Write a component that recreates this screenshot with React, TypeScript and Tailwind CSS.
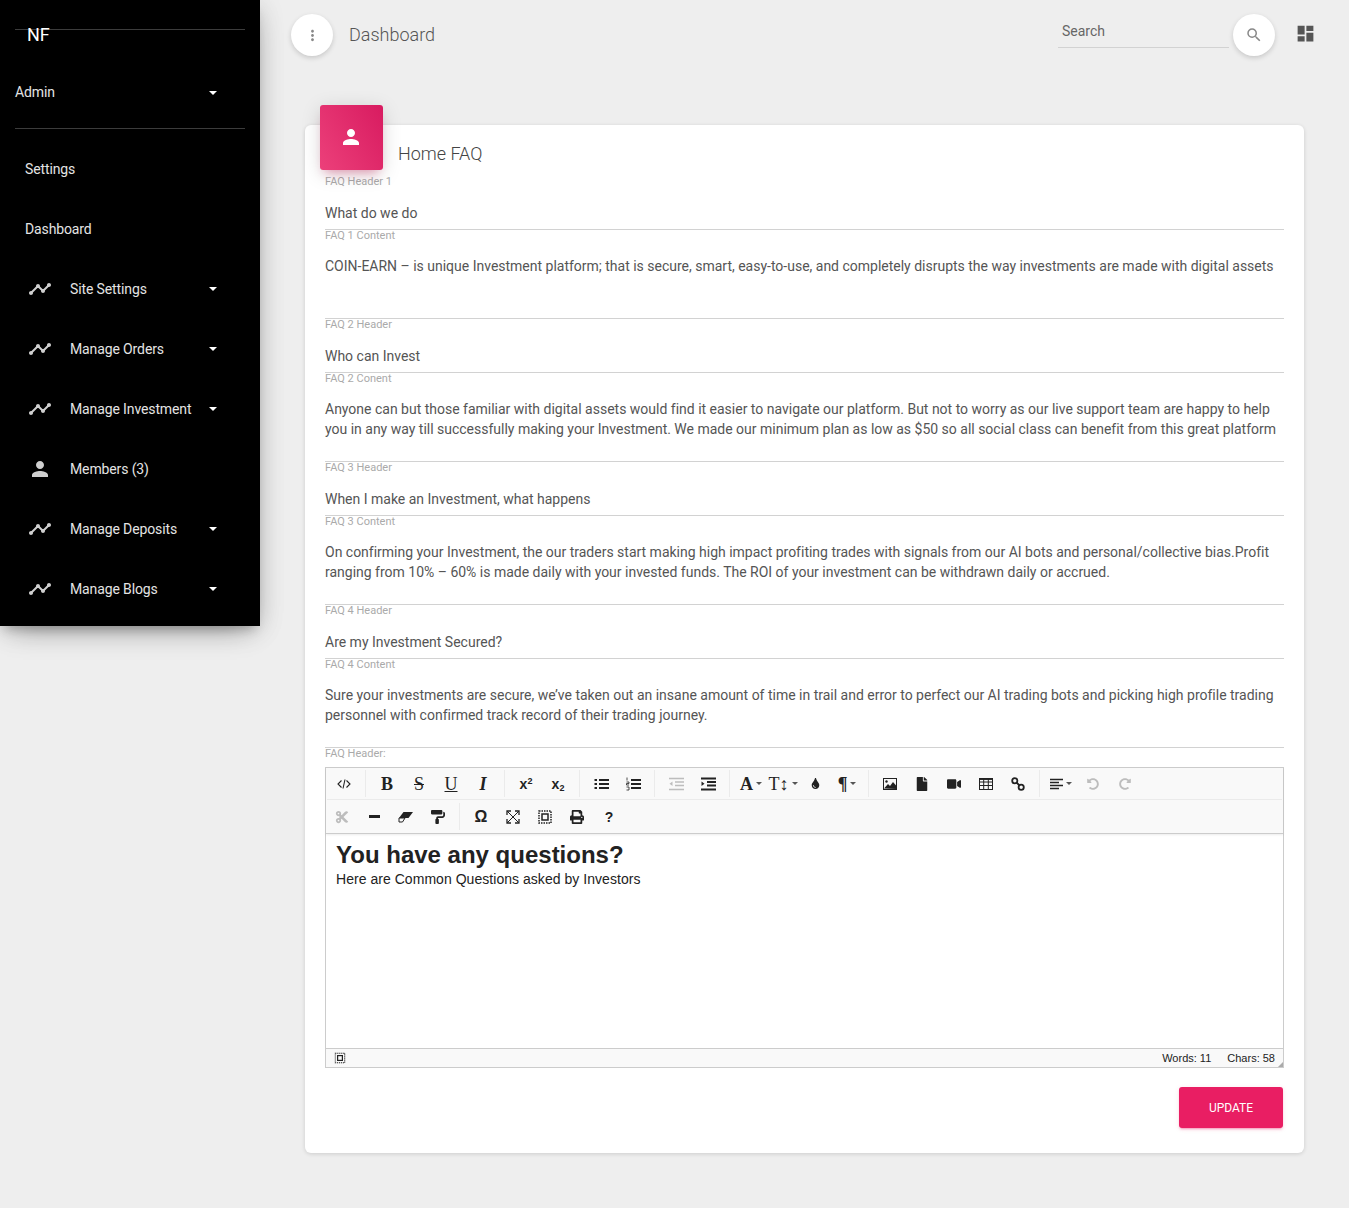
import type { ReactNode } from 'react';
import { MdDashboard, MdMoreVert, MdPerson, MdSearch, MdTimeline } from 'react-icons/md';
import { FaCut, FaFile, FaPaintRoller, FaPrint, FaRedoAlt, FaTint, FaUndoAlt, FaVideo } from 'react-icons/fa';

const faqs = [
  {
    headerLabel: 'FAQ Header 1',
    header: 'What do we do',
    contentLabel: 'FAQ 1 Content',
    content: 'COIN-EARN – is unique Investment platform; that is secure, smart, easy-to-use, and completely disrupts the way investments are made with digital assets',
  },
  {
    headerLabel: 'FAQ 2 Header',
    header: 'Who can Invest',
    contentLabel: 'FAQ 2 Conent',
    content: 'Anyone can but those familiar with digital assets would find it easier to navigate our platform. But not to worry as our live support team are happy to help you in any way till successfully making your Investment. We made our minimum plan as low as $50 so all social class can benefit from this great platform',
  },
  {
    headerLabel: 'FAQ 3 Header',
    header: 'When I make an Investment, what happens',
    contentLabel: 'FAQ 3 Content',
    content: 'On confirming your Investment, the our traders start making high impact profiting trades with signals from our AI bots and personal/collective bias.Profit ranging from 10% – 60% is made daily with your invested funds. The ROI of your investment can be withdrawn daily or accrued.',
  },
  {
    headerLabel: 'FAQ 4 Header',
    header: 'Are my Investment Secured?',
    contentLabel: 'FAQ 4 Content',
    content: 'Sure your investments are secure, we’ve taken out an insane amount of time in trail and error to perfect our AI trading bots and picking high profile trading personnel with confirmed track record of their trading journey.',
  },
];

const navItems = [
  { label: 'Site Settings', caret: true },
  { label: 'Manage Orders', caret: true },
  { label: 'Manage Investment', caret: true },
  { label: 'Members (3)', caret: false },
  { label: 'Manage Deposits', caret: true },
  { label: 'Manage Blogs', caret: true },
];

function Caret({ className = 'border-t-white' }: { className?: string }) {
  return <span className={`inline-block h-0 w-0 border-x-4 border-t-4 border-x-transparent ${className}`} />;
}

function Sidebar() {
  return (
    <aside className="relative z-10 w-[260px] shrink-0 bg-black pb-[7px] pt-[29px] text-sm tracking-[-0.12px] text-[#e4e4e4] shadow-[0_10px_30px_-12px_rgba(0,0,0,0.42),0_4px_25px_0_rgba(0,0,0,0.12),0_8px_10px_-5px_rgba(0,0,0,0.2)]">
      <span className="absolute left-[27px] top-[24px] text-lg leading-[22px] tracking-normal text-white">NF</span>
      <div className="mx-[15px] border-t border-[#3c3c3c]" />
      <div className="mx-[15px] flex h-[99px] items-start justify-between border-b border-[#3c3c3c] pt-[52px] leading-5">
        <span>Admin</span>
        <span className="mr-[28px] mt-[9px] flex"><Caret /></span>
      </div>
      <nav className="mt-[10px]">
        <div className="flex h-[60px] items-center pl-[25px]">Settings</div>
        <div className="flex h-[60px] items-center pl-[25px]">Dashboard</div>
        {navItems.map((item) => (
          <div key={item.label} className="flex h-[60px] items-center pl-7">
            <span className="flex w-[42px] shrink-0 text-[#cfcfcf]">
              {item.caret ? <MdTimeline size={24} /> : <MdPerson size={24} />}
            </span>
            <span className="flex-1">{item.label}</span>
            {item.caret && <span className="mr-[43px] flex"><Caret /></span>}
          </div>
        ))}
      </nav>
    </aside>
  );
}

function Header() {
  return (
    <header className="flex h-14 items-end">
      <div className="flex h-[42px] w-[42px] items-center justify-center rounded-full bg-white text-[#888] shadow-[0_2px_5px_rgba(0,0,0,0.16)]">
        <MdMoreVert size={17} />
      </div>
      <span className="ml-4 self-center pt-[14px] text-lg font-light leading-[42px] text-[#555]">Dashboard</span>
      <div className="ml-auto flex items-end">
        <div className="mb-2 h-[34px] w-[171px] border-b border-[#d2d2d2] pl-1 pt-[7px] text-sm leading-5 text-[#666]">Search</div>
        <div className="ml-1 flex h-[42px] w-[42px] items-center justify-center rounded-full bg-white text-[#888] shadow-[0_2px_5px_rgba(0,0,0,0.16)]">
          <MdSearch size={18} />
        </div>
        <span className="mb-3 ml-5 flex text-[#555]"><MdDashboard size={21} /></span>
      </div>
    </header>
  );
}

function Field({ label, value, tall }: { label: string; value: string; tall?: boolean }) {
  return (
    <div className={`border-b border-[#d2d2d2] ${tall ? 'h-[89px]' : 'h-[54px]'}`}>
      <div className="text-[11px] leading-[11px] text-[#aaa]">{label}</div>
      <div className={`text-sm leading-5 tracking-[-0.005px] text-[#555] ${tall ? 'mt-[15px]' : 'mt-4'}`}>{value}</div>
    </div>
  );
}

function ToolBtn({ children, w = 'w-8', off }: { children: ReactNode; w?: string; off?: boolean }) {
  return (
    <span className={`flex h-8 shrink-0 items-center justify-center ${w} ${off ? 'text-[#bdbdbd]' : 'text-[#222]'}`}>
      {children}
    </span>
  );
}

function Sep() {
  return <span className="mx-[5px] h-[27px] w-px shrink-0 bg-[#ebebeb]" />;
}

function Glyph({ children, className = '' }: { children: ReactNode; className?: string }) {
  return <span className={`font-['Liberation_Serif',serif] text-[18px] font-bold leading-none ${className}`}>{children}</span>;
}

function Svg({ children, w = 14, h = 14 }: { children: ReactNode; w?: number; h?: number }) {
  return <svg width={w} height={h} viewBox={`0 0 ${w} ${h}`} fill="none" stroke="currentColor">{children}</svg>;
}

const SelectAllIcon = () => (
  <Svg>
    <rect x="1" y="1" width="12" height="12" strokeWidth="1.5" strokeDasharray="1.5 1" />
    <rect x="4" y="4" width="6" height="6" strokeWidth="1.5" />
  </Svg>
);

const SmallCaret = () => (
  <span className="ml-[3px] flex"><Caret className="border-x-[3px] border-t-[3px] border-t-[#555]" /></span>
);

function Toolbar() {
  return (
    <div className="border-b border-[#ccc] bg-[#f9f9f9] shadow-[0_1px_2px_rgba(0,0,0,0.08)]">
      <div className="mx-px flex h-[32px] items-center border-b border-[#ebebeb] pl-px">
        <ToolBtn>
          <Svg><path d="M4.5 3.5 1 7l3.5 3.5M9.5 3.5 13 7l-3.5 3.5M8 2.5l-2 9" strokeWidth="1.1" /></Svg>
        </ToolBtn>
        <Sep />
        <ToolBtn><Glyph>B</Glyph></ToolBtn>
        <ToolBtn><Glyph className="font-normal line-through">S</Glyph></ToolBtn>
        <ToolBtn><Glyph className="font-normal underline">U</Glyph></ToolBtn>
        <ToolBtn><Glyph className="italic">I</Glyph></ToolBtn>
        <Sep />
        <ToolBtn><span className="font-['Liberation_Sans',sans-serif] text-sm font-bold">x<sup className="text-[9px]">2</sup></span></ToolBtn>
        <ToolBtn><span className="font-['Liberation_Sans',sans-serif] text-sm font-bold">x<sub className="text-[9px]">2</sub></span></ToolBtn>
        <Sep />
        <ToolBtn>
          <Svg w={15}><path d="M5 3h10M5 7h10M5 11h10" strokeWidth="2" /><path d="M0.5 3h2.5M0.5 7h2.5M0.5 11h2.5" strokeWidth="2" /></Svg>
        </ToolBtn>
        <ToolBtn>
          <Svg w={15}><path d="M5 3h10M5 7h10M5 11h10" strokeWidth="2" /><path d="M1 0.5v3M0.5 5h2.5v1.5h-2.5v1.5h2.5M0.5 10h2.5v3h-2.5" strokeWidth="0.8" /></Svg>
        </ToolBtn>
        <Sep />
        <ToolBtn off>
          <Svg w={15}><path d="M0 1.5h15M6 5h9M6 8.5h9M0 12.5h15" strokeWidth="1.6" /><path d="M3.5 4.5v4.5l-3-2.25z" fill="currentColor" stroke="none" /></Svg>
        </ToolBtn>
        <ToolBtn>
          <Svg w={15}><path d="M0 1.5h15M6 5h9M6 8.5h9M0 12.5h15" strokeWidth="1.8" /><path d="M0.5 4.5v4.5l3-2.25z" fill="currentColor" stroke="none" /></Svg>
        </ToolBtn>
        <Sep />
        <ToolBtn><Glyph className="text-[18px]">A</Glyph><SmallCaret /></ToolBtn>
        <ToolBtn><span className="font-['Liberation_Serif',serif] text-[18px] leading-none">T↕</span><SmallCaret /></ToolBtn>
        <ToolBtn><FaTint size={11} /></ToolBtn>
        <ToolBtn><Glyph className="text-[16px]">¶</Glyph><SmallCaret /></ToolBtn>
        <Sep />
        <ToolBtn>
          <Svg h={12}><rect x="0.5" y="0.5" width="13" height="11" strokeWidth="1" /><circle cx="3.5" cy="3.5" r="1.2" fill="currentColor" stroke="none" /><path d="M1 10.5 5 6l2 2 3-4 3.5 4v3z" fill="currentColor" stroke="none" /></Svg>
        </ToolBtn>
        <ToolBtn><FaFile size={14} /></ToolBtn>
        <ToolBtn><FaVideo size={14} /></ToolBtn>
        <ToolBtn>
          <Svg h={12}><rect x="0.5" y="0.5" width="13" height="11" strokeWidth="1" /><path d="M0 4h14M0 7.5h14M4.7 1v10M9.3 1v10" strokeWidth="1" /><path d="M0 1.2h14" strokeWidth="1.5" /></Svg>
        </ToolBtn>
        <ToolBtn>
          <Svg><circle cx="3.8" cy="3.8" r="2.6" strokeWidth="1.8" /><circle cx="10.2" cy="10.2" r="2.6" strokeWidth="1.8" /><path d="M5.5 5.5l3 3" strokeWidth="1.8" /></Svg>
        </ToolBtn>
        <Sep />
        <ToolBtn>
          <Svg w={13} h={12}><path d="M0 1.5h13M0 4.5h9M0 7.5h13M0 10.5h9" strokeWidth="1.6" /></Svg>
          <SmallCaret />
        </ToolBtn>
        <ToolBtn off><FaUndoAlt size={12} /></ToolBtn>
        <ToolBtn off><FaRedoAlt size={12} /></ToolBtn>
      </div>
      <div className="flex h-[33px] items-center">
        <ToolBtn off><FaCut size={14} /></ToolBtn>
        <ToolBtn><span className="h-[3px] w-[11px] bg-[#222]" /></ToolBtn>
        <ToolBtn>
          <Svg w={16} h={12}><path d="M5.5 1H15l-4.5 6H1z" fill="currentColor" stroke="none" /><path d="M1 7h6l-2.5 4H1z" strokeWidth="1" /></Svg>
        </ToolBtn>
        <ToolBtn><FaPaintRoller size={14} /></ToolBtn>
        <Sep />
        <ToolBtn><span className="font-['Liberation_Sans',sans-serif] text-base font-bold leading-none">Ω</span></ToolBtn>
        <ToolBtn>
          <Svg><path d="M1 1l12 12M13 1 1 13" strokeWidth="1" /><path d="M1 5V1h4M9 1h4v4M13 9v4H9M5 13H1V9" strokeWidth="1.3" /></Svg>
        </ToolBtn>
        <ToolBtn><SelectAllIcon /></ToolBtn>
        <ToolBtn><FaPrint size={14} /></ToolBtn>
        <ToolBtn><span className="font-['Liberation_Sans',sans-serif] text-sm font-bold leading-none">?</span></ToolBtn>
      </div>
    </div>
  );
}

function Editor() {
  return (
    <div className="relative h-[301px] border border-[#ccc]">
      <Toolbar />
      <div className="h-[214px] px-[10px] pt-[7px] font-['Liberation_Sans',sans-serif] text-sm text-[#222]">
        <div className="text-2xl font-bold leading-[27px]">You have any questions?</div>
        <div className="pt-px leading-[20px] tracking-[0.04px]">Here are Common Questions asked by Investors</div>
      </div>
      <div className="flex h-[19px] items-center border-t border-[#ccc] bg-[#f9f9f9] pl-[7px] pr-2 font-['Liberation_Sans',sans-serif] text-[11px] text-[#222]">
        <span className="flex scale-[0.8]"><SelectAllIcon /></span>
        <span className="ml-auto">Words: 11</span>
        <span className="ml-4">Chars: 58</span>
      </div>
      <span className="absolute bottom-0 right-0 h-0 w-0 border-b-[5px] border-l-[5px] border-b-[#aaa] border-l-transparent" />
    </div>
  );
}

function Card() {
  return (
    <section className="relative ml-[14px] mr-3 mt-[69px] rounded-md bg-white px-5 pb-[25px] shadow-[0_1px_4px_rgba(0,0,0,0.14)]">
      <div className="absolute left-[15px] top-[-20px] flex h-[65px] w-[63px] items-start justify-center rounded-[3px] bg-[linear-gradient(60deg,#ec407a,#d81b60)] pr-px pt-[20px] text-white shadow-[0_4px_20px_rgba(0,0,0,0.14),0_7px_10px_-5px_rgba(233,30,99,0.4)]">
        <MdPerson size={24} />
      </div>
      <div className="h-[51px] pl-[73px] pt-[17px] text-lg font-light leading-[24px] text-[#444]">Home FAQ</div>
      {faqs.map((faq) => (
        <div key={faq.headerLabel}>
          <Field label={faq.headerLabel} value={faq.header} />
          <Field label={faq.contentLabel} value={faq.content} tall />
        </div>
      ))}
      <div className="h-[19px] text-[11px] leading-[11px] text-[#aaa]">FAQ Header:</div>
      <Editor />
      <div className="mt-[19px] flex justify-end pr-px">
        <div className="flex h-[41px] w-[104px] items-center justify-center rounded-[3px] bg-[#e91e63] text-xs text-white shadow-[0_2px_2px_0_rgba(233,30,99,0.14),0_3px_1px_-2px_rgba(233,30,99,0.2),0_1px_5px_0_rgba(233,30,99,0.12)]">
          UPDATE
        </div>
      </div>
    </section>
  );
}

export default function App() {
  return (
    <div className="flex min-h-[1208px] items-start bg-[#eeeeee] font-['Roboto',sans-serif]">
      <Sidebar />
      <main className="min-w-0 flex-1 pl-[31px] pr-[33px]">
        <Header />
        <Card />
      </main>
    </div>
  );
}
